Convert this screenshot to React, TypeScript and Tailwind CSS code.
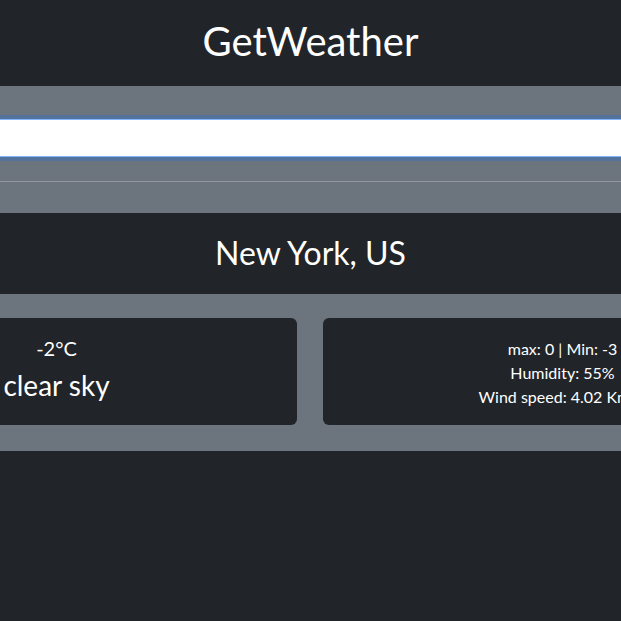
export default function App() {
  const weather = {
    city: "New York, US",
    temp: "-2°C",
    description: "clear sky",
    max: 0,
    min: -3,
    humidity: 55,
    wind: "4.02 Km/h",
  }

  return (
    <div className="min-h-[621px] overflow-hidden bg-[#212529] text-white font-['Lato',sans-serif]">
      <header className="pt-[17px] pb-[21px] text-center">
        <h1 className="text-[40px] leading-[48px] font-normal">GetWeather</h1>
      </header>

      <section className="bg-[#6c757d] pt-[33px] pb-[31px]">
        <div className="flex justify-center">
          <input
            type="text"
            className="w-[986px] shrink-0 h-[38px] bg-white border border-[#86b7fe] shadow-[0_0_0_4px_rgba(13,110,253,0.25)] outline-none px-3 text-[#212529]"
          />
        </div>
        <hr className="mt-[24px] border-0 border-t border-[#92989d]" />
      </section>

      <section className="pt-[20px] pb-[22px] text-center">
        <h2 className="text-[32px] leading-[39px] font-normal">{weather.city}</h2>
      </section>

      <section className="bg-[#6c757d] pt-[24px] pb-[26px]">
        <div className="flex justify-center gap-[26px] pr-[2px]">
          <div className="w-[480px] shrink-0 rounded-md bg-[#212529] px-4 pt-[18px] pb-[14px] text-center">
            <h5 className="text-[20px] leading-[24px] mb-2">{weather.temp}</h5>
            <h3 className="text-[28px] leading-[34px] mb-2">{weather.description}</h3>
          </div>
          <div className="w-[480px] shrink-0 rounded-md bg-[#212529] px-4 pt-[19px] pb-4 text-center text-[16px] leading-[24px]">
            <p>
              max: {weather.max} | Min: {weather.min}
            </p>
            <p>Humidity: {weather.humidity}%</p>
            <p>Wind speed: {weather.wind}</p>
          </div>
        </div>
      </section>
    </div>
  )
}
